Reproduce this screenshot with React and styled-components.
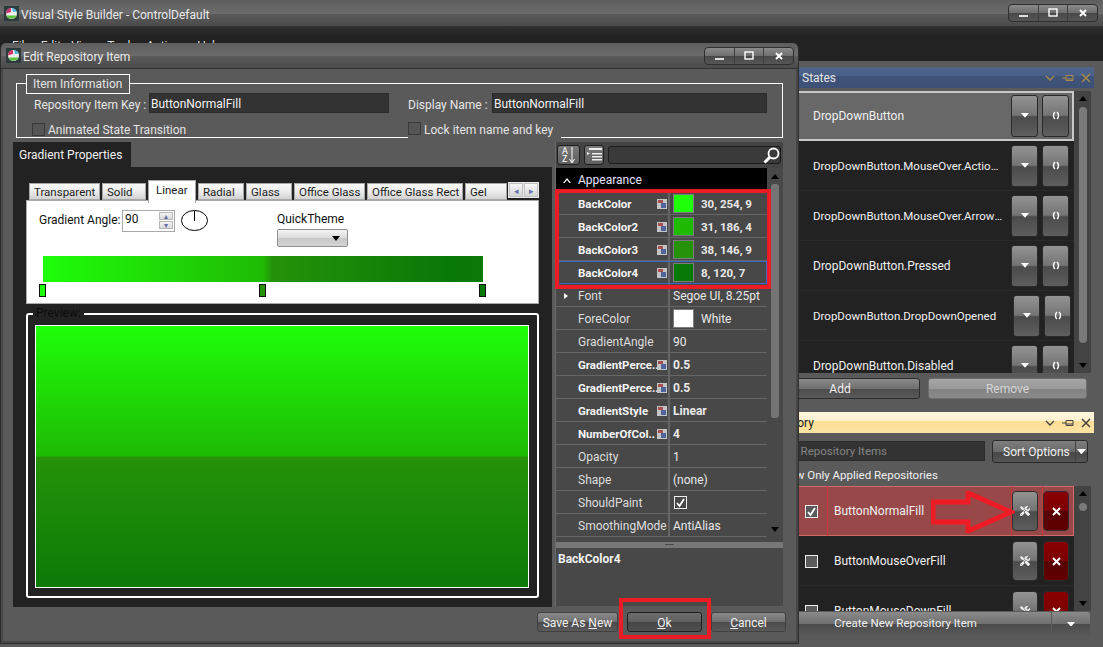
import React from "react";
import styled, { createGlobalStyle } from "styled-components";
import { FaTools } from "react-icons/fa";

const gloss = `linear-gradient(#939393, #747474 48%, #4b4b4b 52%, #5e5e5e)`;
const chrome = `linear-gradient(#5e5e5e, #6c6c6c 52%, #5b5b5b 52%, #4b4b4b)`;

const GlobalStyle = createGlobalStyle`
  html, body {
    margin: 0;
    width: 1103px;
    height: 647px;
    overflow: hidden;
    background: #5a5a5a;
    font-family: Roboto, "Open Sans", "Liberation Sans", sans-serif;
    font-size: 12px;
    color: #f0f0f0;
  }
  * { box-sizing: border-box; }
`;

const Logo = () => (
  <LogoBox>
    <svg width="13" height="13" viewBox="0 0 13 13">
      <circle cx="6.5" cy="6.5" r="5.5" fill="#eee" />
      <path d="M1 6.5a5.5 5.5 0 0 1 5-5.5v4z" fill="#d8326e" />
      <path d="M1.5 8.5a5.5 5.5 0 0 0 10 0z" fill="#5cc43c" />
      <path d="M7 1a5.5 5.5 0 0 1 4.500 3.500L8 5z" fill="#46b6d8" />
    </svg>
  </LogoBox>
);

const WindowButtons = () => (
  <WinButtons>
    <WinButton>
      <svg width="10" height="10"><rect x="1" y="7" width="9" height="2" fill="#ddd" /></svg>
    </WinButton>
    <WinButton>
      <svg width="10" height="10"><rect x="1" y="1" width="8" height="7" fill="none" stroke="#fff" strokeWidth="1.400" /></svg>
    </WinButton>
    <WinButton>
      <svg width="10" height="10"><path d="M2 2l6 6M8 2l-6 6" stroke="#fff" strokeWidth="2" /></svg>
    </WinButton>
  </WinButtons>
);

const PropIcon = () => (
  <svg width="10" height="10" viewBox="0 0 10 10">
    <rect width="10" height="10" fill="#c4c4c4" />
    <rect x="1" y="1" width="5" height="3" fill="#a8504e" />
    <rect x="4" y="4" width="5" height="5" fill="#4f639c" />
  </svg>
);

const Caret = ({ size = 7 }) => (
  <svg width={size} height={size * 0.6} viewBox="0 0 10 6">
    <path d="M0 0h10L5 6z" fill="#fff" />
  </svg>
);

const RefreshIcon = () => (
  <svg width="8" height="9" viewBox="0 0 8 9" fill="none" stroke="#fff" strokeWidth="1.500">
    <path d="M3 1C1 2.500 1 6.500 3 8" />
    <path d="M5 1C7 2.500 7 6.500 5 8" />
  </svg>
);

const CrossIcon = () => (
  <svg width="9" height="9" viewBox="0 0 9 9">
    <path d="M1 1l7 7M8 1l-7 7" stroke="#fff" strokeWidth="2" />
  </svg>
);

const ArrowUp = () => (
  <svg width="8" height="5" viewBox="0 0 8 5"><path d="M0 5h8L4 0z" fill="#000" /></svg>
);
const ArrowDown = () => (
  <svg width="8" height="5" viewBox="0 0 8 5"><path d="M0 0h8L4 5z" fill="#000" /></svg>
);

const properties = [
  { name: "BackColor", bold: true, icon: true, swatch: "#1efe09", value: "30, 254, 9" },
  { name: "BackColor2", bold: true, icon: true, swatch: "#1fba04", value: "31, 186, 4" },
  { name: "BackColor3", bold: true, icon: true, swatch: "#269209", value: "38, 146, 9" },
  { name: "BackColor4", bold: true, icon: true, swatch: "#087807", value: "8, 120, 7", selected: true },
  { name: "Font", expand: true, value: "Segoe UI, 8.25pt" },
  { name: "ForeColor", swatch: "#fff", value: "White", plain: true },
  { name: "GradientAngle", value: "90" },
  { name: "GradientPerce..", bold: true, icon: true, value: "0.5" },
  { name: "GradientPerce..", bold: true, icon: true, value: "0.5" },
  { name: "GradientStyle", bold: true, icon: true, value: "Linear" },
  { name: "NumberOfCol..", bold: true, icon: true, value: "4" },
  { name: "Opacity", value: "1" },
  { name: "Shape", value: "(none)" },
  { name: "ShouldPaint", check: true },
  { name: "SmoothingMode", value: "AntiAlias" },
];

const states = [
  { name: "DropDownButton", active: true },
  { name: "DropDownButton.MouseOver.ActionButton", tight: true },
  { name: "DropDownButton.MouseOver.ArrowButton", tight: true },
  { name: "DropDownButton.Pressed" },
  { name: "DropDownButton.DropDownOpened", nudge: true, tight: true },
  { name: "DropDownButton.Disabled" },
];

const repositories = [
  { name: "ButtonNormalFill", active: true },
  { name: "ButtonMouseOverFill" },
  { name: "ButtonMouseDownFill" },
];

const tabs = [
  ["Transparent", 71],
  ["Solid", 44],
  ["Linear", 48, true],
  ["Radial", 46],
  ["Glass", 46],
  ["Office Glass", 71],
  ["Office Glass Rect", 96],
  ["Gel", 42],
];

export default function App() {
  return (
    <Screen>
      <GlobalStyle />
      <TitleBar $height={27}>
        <Logo />
        <TitleText>Visual Style Builder - ControlDefault</TitleText>
        <WindowButtons />
      </TitleBar>
      <MenuBar>
        {["File", "Edit", "View", "Tools", "Actions", "Help"].map((m) => (
          <span key={m}>{m}</span>
        ))}
      </MenuBar>

      <Workspace>
        <Dock>
          <DockHeader $pad={62}>
            States
            <HeaderIcons $color="#a88a4a"><HeaderGlyphs /></HeaderIcons>
          </DockHeader>
          <ListFrame $height={282}>
            <List>
              {states.map((s) => (
                <StateRow key={s.name} $active={s.active}>
                  <StateName $tight={s.tight}>{s.name}</StateName>
                  <RowButtons $nudge={s.nudge}>
                    <RowButton><Caret size={8} /></RowButton>
                    <RowButton><RefreshIcon /></RowButton>
                  </RowButtons>
                </StateRow>
              ))}
            </List>
            <ScrollBar>
              <ArrowUp />
              <Thumb $height={236} />
              <ArrowDown />
            </ScrollBar>
          </ListFrame>
          <Actions>
            <ActionButton $width={160}>Add</ActionButton>
            <ActionButton $width={159} $disabled>Remove</ActionButton>
          </Actions>
          <DockHeader $pad={17} $light>
            Repository
            <HeaderIcons $color="#444"><HeaderGlyphs /></HeaderIcons>
          </DockHeader>
          <FilterRow>
            <FilterInput>Filter Repository Items</FilterInput>
            <SortButton>
              <span>Sort Options</span>
              <SortCaret><Caret size={9} /></SortCaret>
            </SortButton>
          </FilterRow>
          <ShowOnly>Show Only Applied Repositories</ShowOnly>
          <ListFrame $height={125}>
            <List>
              {repositories.map((r) => (
                <RepoRow key={r.name} $active={r.active}>
                  <CheckCell $active={r.active}>
                    <CheckBox>
                      {r.active && (
                        <svg width="11" height="11" viewBox="0 0 11 11">
                          <path d="M2 6l2.500 3L9 2" fill="none" stroke="#fff" strokeWidth="1.800" />
                        </svg>
                      )}
                    </CheckBox>
                  </CheckCell>
                  <RepoName>{r.name}</RepoName>
                  <RepoCell $active={r.active} $width={31}>
                    <RepoButton $active={r.active}><FaTools size={10} /></RepoButton>
                  </RepoCell>
                  <RepoCell $active={r.active} $width={32}>
                    <RepoButton $active={r.active} $danger><CrossIcon /></RepoButton>
                  </RepoCell>
                </RepoRow>
              ))}
            </List>
            <ScrollBar>
              <ArrowUp />
              <Knob />
              <Spacer />
              <ArrowDown />
            </ScrollBar>
          </ListFrame>
          <CreateRow>
            <CreateButton>Create New Repository Item</CreateButton>
            <CreateCaret><Caret size={8} /></CreateCaret>
          </CreateRow>
        </Dock>
      </Workspace>

      <Dialog>
        <TitleBar $height={26} $inset>
          <Logo />
          <TitleText>Edit Repository Item</TitleText>
          <WindowButtons />
        </TitleBar>

        <InfoGroup>
          <Legend>Item Information</Legend>
          <InfoGrid>
            <InfoLabel>Repository Item Key :</InfoLabel>
            <TextField>ButtonNormalFill</TextField>
            <span />
            <InfoLabel>Display Name :</InfoLabel>
            <TextField>ButtonNormalFill</TextField>
          </InfoGrid>
          <CheckLine>
            <DarkCheck />
            <CheckText>Animated State Transition</CheckText>
          </CheckLine>
          <LockLine>
            <DarkCheck />
            <CheckText>Lock item name and key</CheckText>
          </LockLine>
        </InfoGroup>

        <Columns>
          <LeftColumn>
            <PageTab>Gradient Properties</PageTab>
            <PagePanel>
              <TabStrip>
                {tabs.map(([label, width, active]) => (
                  <Tab key={label} $width={width} $active={active}>{label}</Tab>
                ))}
                <TabArrows>
                  <TabArrow>◂</TabArrow>
                  <TabArrow>▸</TabArrow>
                </TabArrows>
              </TabStrip>
              <EditorCard>
                <EditorRow>
                  <AngleLabel>Gradient Angle:</AngleLabel>
                  <Spinner>
                    90
                    <SpinButtons>
                      <SpinButton>▴</SpinButton>
                      <SpinButton>▾</SpinButton>
                    </SpinButtons>
                  </Spinner>
                  <AngleDial>
                    <svg width="27" height="21" viewBox="0 0 27 21">
                      <ellipse cx="13.500" cy="10.500" rx="13" ry="10" fill="#fff" stroke="#000" />
                      <path d="M13.500 1v10" stroke="#000" />
                    </svg>
                  </AngleDial>
                  <ThemeColumn>
                    <ThemeLabel>QuickTheme</ThemeLabel>
                    <ThemeSelect>
                      <svg width="8" height="5" viewBox="0 0 8 5"><path d="M0 0h8L4 5z" fill="#000" /></svg>
                    </ThemeSelect>
                  </ThemeColumn>
                </EditorRow>
                <GradientBar />
                <StopRow>
                  <Stop $color="#1efe09" />
                  <Stop $color="#269209" />
                  <Stop $color="#087807" />
                </StopRow>
              </EditorCard>
              <PreviewGroup>
                <PreviewLegend>Preview:</PreviewLegend>
                <PreviewFill />
              </PreviewGroup>
            </PagePanel>
          </LeftColumn>

          <RightColumn>
            <GridToolbar>
              <ToolButton $width={23}>
                <AzLetters><span>A</span><span>Z</span></AzLetters>
                <svg width="6" height="17" viewBox="0 0 6 17">
                  <path d="M3 0v15M0.500 12L3 16l2.500-4" fill="none" stroke="#fff" />
                </svg>
              </ToolButton>
              <ToolButton $width={20}>
                <svg width="15" height="14" viewBox="0 0 15 14" fill="#eee">
                  <rect x="2" y="0" width="13" height="2" />
                  <path d="M0 4l3 1.500L0 7z" />
                  <rect x="5" y="5" width="10" height="1.500" />
                  <rect x="5" y="8" width="10" height="1.500" />
                  <rect x="5" y="11" width="10" height="1.500" />
                </svg>
              </ToolButton>
              <GridSearch>
                <svg width="17" height="17" viewBox="0 0 17 17" fill="none" stroke="#fff">
                  <circle cx="10.500" cy="6.500" r="5" strokeWidth="1.800" />
                  <path d="M7 10l-5.500 5.500" strokeWidth="3" />
                </svg>
              </GridSearch>
            </GridToolbar>
            <GridBody>
              <GridRows>
                <Category>
                  <svg width="8" height="5" viewBox="0 0 8 5">
                    <path d="M0 5l4-5 4 5-1.500 0L4 2 1.500 5z" fill="#fff" />
                  </svg>
                  Appearance
                </Category>
                {properties.map((p, i) => (
                  <PropRow key={i} $selected={p.selected}>
                    <PropName $bold={p.bold}>
                      <ExpandSlot>
                        {p.expand && (
                          <svg width="4" height="6" viewBox="0 0 4 6"><path d="M0 0l4 3-4 3z" fill="#fff" /></svg>
                        )}
                      </ExpandSlot>
                      <NameText>{p.name}</NameText>
                      {p.icon && <PropIcon />}
                    </PropName>
                    <PropValue $bold={p.bold && !p.swatch}>
                      {p.swatch && <Swatch $color={p.swatch} />}
                      {p.check && (
                        <ValueCheck>
                          <svg width="11" height="11" viewBox="0 0 11 11">
                            <path d="M2 6l2.500 3L9 2" fill="none" stroke="#fff" strokeWidth="1.800" />
                          </svg>
                        </ValueCheck>
                      )}
                      <ValueText $strong={p.swatch && !p.plain}>{p.value}</ValueText>
                    </PropValue>
                  </PropRow>
                ))}
              </GridRows>
              <GridScroll>
                <ArrowUp />
                <GridThumb />
                <Spacer />
                <ArrowDown />
              </GridScroll>
            </GridBody>
            <Splitter>•••••</Splitter>
            <Description>BackColor4</Description>
          </RightColumn>
        </Columns>

        <DialogFooter>
          <FooterButton $width={81}><span>Save As <u>N</u>ew</span></FooterButton>
          <FooterButton $width={75} $primary><span><u>O</u>k</span></FooterButton>
          <FooterButton $width={75}><span><u>C</u>ancel</span></FooterButton>
        </DialogFooter>
      </Dialog>

      <RedBox $x={555} $y={189} $w={216} $h={100} />
      <RedBox $x={619} $y={598} $w={92} $h={41} />
      <RedArrow width="84" height="42" viewBox="0 0 84 42">
        <path d="M2 11H37V2L80 21L37 40V31H2z" fill="none" stroke="#ed1c24" strokeWidth="5" />
      </RedArrow>
    </Screen>
  );
}

const HeaderGlyphs = () => (
  <>
    <svg width="10" height="6" viewBox="0 0 10 6">
      <path d="M1 1l4 4 4-4" fill="none" stroke="currentColor" strokeWidth="1.300" />
    </svg>
    <svg width="12" height="10" viewBox="0 0 12 10">
      <path d="M0 5h4M4 2.500h7v5H4zM4 6h7" fill="none" stroke="currentColor" />
    </svg>
    <svg width="10" height="10" viewBox="0 0 10 10">
      <path d="M1 1l8 8M9 1l-8 8" stroke="currentColor" strokeWidth="1.500" />
    </svg>
  </>
);

const Screen = styled.div`
  position: relative;
  width: 1103px;
  height: 647px;
  overflow: hidden;
  background: #5a5a5a;
`;

const TitleBar = styled.div`
  display: flex;
  align-items: center;
  height: ${(p) => p.$height}px;
  padding: 0 ${(p) => (p.$inset ? 4 : 5)}px 0 ${(p) => (p.$inset ? 5 : 4)}px;
  background: ${chrome};
  border-bottom: 1px solid #333;
`;

const LogoBox = styled.div`
  display: flex;
  align-items: center;
  justify-content: center;
  width: 15px;
  height: 15px;
  background: #2b3a3a;
  margin-right: 2px;
`;

const TitleText = styled.div`
  flex: 1;
  padding-top: 3px;
  font-size: 12px;
  color: #eaeaea;
`;

const WinButtons = styled.div`
  display: flex;
  width: 90px;
  height: 18px;
  border: 1px solid #2e2e2e;
  border-radius: 4px;
  overflow: hidden;
  background: linear-gradient(#8a8a8a, #6e6e6e 50%, #484848 50%, #565656);
`;

const WinButton = styled.div`
  flex: 1;
  display: flex;
  align-items: center;
  justify-content: center;
  & + & { border-left: 1px solid #3e3e3e; }
`;

const MenuBar = styled.div`
  display: flex;
  gap: 10px;
  height: 34px;
  padding: 12px 0 0 12px;
  background: linear-gradient(#2e2e2e, #222 30%);
  font-size: 12px;
  color: #ddd;
`;

const Workspace = styled.div`
  display: flex;
  justify-content: flex-end;
  padding: 6px 9px 0 0;
`;

const Dock = styled.div`
  display: flex;
  flex-direction: column;
  width: 354px;
`;

const DockHeader = styled.div`
  display: flex;
  align-items: center;
  justify-content: space-between;
  height: 21px;
  flex: none;
  padding: 0 3px 0 ${(p) => p.$pad}px;
  font-size: 12px;
  color: ${(p) => (p.$light ? "#222" : "#e6e6e6")};
  background: ${(p) =>
    p.$light
      ? "linear-gradient(#fff6de, #fff0cf 45%, #fddf96 45%, #fde3a3)"
      : "linear-gradient(#4f6488, #48608a 45%, #3f5378 45%, #3e5076)"};
`;

const HeaderIcons = styled.div`
  display: flex;
  align-items: center;
  gap: 7px;
  color: ${(p) => p.$color};
`;

const ListFrame = styled.div`
  display: flex;
  flex: none;
  height: ${(p) => p.$height}px;
  width: 351px;
  margin-top: 3px;
  overflow: hidden;
`;

const List = styled.div`
  flex: 1;
  background: #222;
  overflow: hidden;
`;

const StateRow = styled.div`
  display: flex;
  align-items: center;
  justify-content: space-between;
  height: 50px;
  padding: 0 0 1px 73px;
  background: ${(p) => (p.$active ? "#686868" : "#222")};
  box-shadow: ${(p) => (p.$active ? "inset 0 0 0 2px #c8c8c8" : "inset 0 -1px 0 #2a2a2a")};
`;

const StateName = styled.div`
  width: 190px;
  font-size: ${(p) => (p.$tight ? 11.5 : 12)}px;
  white-space: nowrap;
  overflow: hidden;
  text-overflow: ellipsis;
`;

const RowButtons = styled.div`
  display: flex;
  gap: 4px;
  margin-right: ${(p) => (p.$nudge ? 3 : 5)}px;
`;

const RowButton = styled.div`
  display: flex;
  align-items: center;
  justify-content: center;
  width: 27px;
  height: 42px;
  border-radius: 3px;
  background: ${gloss};
  border: 1px solid #2a2a2a;
`;

const ScrollBar = styled.div`
  display: flex;
  flex-direction: column;
  align-items: center;
  justify-content: space-between;
  flex: none;
  width: 17px;
  padding: 5px 0;
  background: #434343;
`;

const Thumb = styled.div`
  width: 8px;
  height: ${(p) => p.$height}px;
  margin-bottom: 15px;
  border-radius: 4px;
  background: #7a7a7a;
`;

const Knob = styled.div`
  width: 8px;
  height: 8px;
  margin-top: 7px;
  border-radius: 50%;
  background: #7a7a7a;
`;

const Spacer = styled.div`
  flex: 1;
`;

const Actions = styled.div`
  display: flex;
  gap: 8px;
  margin: 5px 0 13px 20px;
`;

const ActionButton = styled.div`
  display: flex;
  align-items: center;
  justify-content: center;
  width: ${(p) => p.$width}px;
  height: 21px;
  border-radius: 3px;
  font-size: 12px;
  background: ${(p) =>
    p.$disabled
      ? "linear-gradient(#a4a4a4, #9a9a9a 50%, #828282 50%, #8a8a8a)"
      : "linear-gradient(#8a8a8a, #6f6f6f 50%, #4b4b4b 50%, #5a5a5a)"};
  border: 1px solid ${(p) => (p.$disabled ? "#6e6e6e" : "#2b2b2b")};
  color: ${(p) => (p.$disabled ? "#d4d4d4" : "#f0f0f0")};
`;

const FilterRow = styled.div`
  display: flex;
  gap: 7px;
  margin-top: 7px;
  padding-left: 5px;
`;

const FilterInput = styled.div`
  display: flex;
  align-items: center;
  width: 240px;
  height: 20px;
  padding-left: 26px;
  margin-top: 1px;
  background: #333;
  border: 1px solid #2c2c2c;
  color: #858585;
  font-size: 11.5px;
`;

const SortButton = styled.div`
  display: flex;
  align-items: center;
  justify-content: space-between;
  width: 96px;
  height: 23px;
  padding-left: 10px;
  border-radius: 3px;
  border: 1px solid #2a2a2a;
  background: linear-gradient(#7e7e7e, #6a6a6a 50%, #474747 50%, #555);
  font-size: 12px;
  & > span { white-space: nowrap; }
`;

const SortCaret = styled.div`
  display: flex;
  align-items: center;
  justify-content: center;
  width: 12px;
  height: 100%;
  border-left: 1px solid #444;
`;

const ShowOnly = styled.div`
  margin: 2px 0 0 36px;
  height: 18px;
  line-height: 21px;
  font-size: 11.5px;
  white-space: nowrap;
`;

const RepoRow = styled.div`
  display: flex;
  align-items: center;
  height: 50px;
  background: ${(p) => (p.$active ? "#984848" : "#222")};
  box-shadow: ${(p) => (p.$active ? "inset 0 0 0 1px #d26a6a" : "inset 0 -1px 0 #2a2a2a")};
`;

const CheckCell = styled.div`
  display: flex;
  align-items: center;
  justify-content: flex-end;
  width: 88px;
  height: 100%;
  padding-right: 9px;
  border-right: 1px solid ${(p) => (p.$active ? "#c83a3a" : "transparent")};
`;

const CheckBox = styled.div`
  display: flex;
  align-items: center;
  justify-content: center;
  width: 13px;
  height: 13px;
  border: 1px solid #eee;
  background: #5a5a5a;
`;

const RepoName = styled.div`
  flex: 1;
  padding-left: 6px;
  font-size: 12px;
`;

const RepoCell = styled.div`
  display: flex;
  align-items: center;
  width: ${(p) => p.$width}px;
  height: 100%;
  padding-right: ${(p) => p.$width - 27}px;
  border-left: 1px solid ${(p) => (p.$active ? "#c83a3a" : "transparent")};
`;

const RepoButton = styled.div`
  display: flex;
  align-items: center;
  justify-content: center;
  width: 27px;
  height: 40px;
  border-radius: 4px;
  border: 1px solid ${(p) => (p.$active ? "#2e2e2e" : "#2a2a2a")};
  background: ${(p) =>
    p.$danger ? "linear-gradient(#8a0000, #7c0000 50%, #560000 50%, #620000)" : gloss};
`;

const CreateRow = styled.div`
  display: flex;
  gap: 1px;
  margin: 1px 0 0 20px;
`;

const CreateButton = styled.div`
  display: flex;
  align-items: center;
  justify-content: center;
  width: 291px;
  height: 24px;
  padding-bottom: 2px;
  border-radius: 3px 0 0 3px;
  font-size: 11.5px;
  background: linear-gradient(#8a8a8a, #6f6f6f 50%, #4b4b4b 50%, #5a5a5a);
`;

const CreateCaret = styled(CreateButton)`
  width: 38px;
  padding-bottom: 0;
  border-radius: 0 3px 3px 0;
`;

const Dialog = styled.div`
  position: absolute;
  left: 0;
  top: 43px;
  width: 799px;
  height: 601px;
  background: #5a5a5a;
  border-radius: 6px 6px 0 0;
  border: 1px solid #2e2e2e;
  border-top: 0;
  box-shadow: inset 2px 0 0 #474747, inset -2px 0 0 #474747, inset 0 -2px 0 #474747;
  overflow: hidden;
`;

const InfoGroup = styled.div`
  position: relative;
  width: 767px;
  height: 55px;
  margin: 14px 0 0 15px;
  border: 1px solid #fff;
`;

const Legend = styled.div`
  position: absolute;
  left: 9px;
  top: -10px;
  width: 104px;
  height: 20px;
  line-height: 19px;
  padding-left: 6px;
  background: #5a5a5a;
  border: 1px solid #fff;
  color: #e2e2e2;
  font-size: 12px;
`;

const InfoGrid = styled.div`
  display: grid;
  grid-template-columns: 115px 240px 19px 84px 275px;
  align-items: center;
  margin: 9px 0 0 17px;
`;

const InfoLabel = styled.div`
  padding-top: 3px;
  color: #e6e6e6;
  font-size: 12px;
  white-space: nowrap;
`;

const TextField = styled.div`
  display: flex;
  align-items: center;
  height: 20px;
  padding: 1px 0 0 1px;
  background: #333;
  border: 1px solid #2b2b2b;
  font-size: 12px;
  color: #f2f2f2;
`;

const CheckLine = styled.div`
  display: flex;
  align-items: center;
  gap: 3px;
  margin: 8px 0 0 15px;
  font-size: 12px;
  color: #e4e4e4;
`;

const LockLine = styled.div`
  position: absolute;
  left: 391px;
  top: 34px;
  display: flex;
  align-items: center;
  gap: 3px;
  width: 153px;
  height: 21px;
  background: #5a5a5a;
  font-size: 12px;
  color: #e4e4e4;
  white-space: nowrap;
`;

const CheckText = styled.span`
  padding-top: 2px;
`;

const DarkCheck = styled.span`
  display: inline-block;
  width: 13px;
  height: 13px;
  background: #555;
  border: 1px solid #3a3a3a;
`;

const Columns = styled.div`
  display: flex;
  gap: 3px;
  margin: 4px 0 0 12px;
`;

const LeftColumn = styled.div`
  width: 539px;
`;

const PageTab = styled.div`
  display: flex;
  align-items: center;
  width: 118px;
  height: 25px;
  padding: 1px 0 0 6px;
  background: #222;
  font-size: 12px;
`;

const PagePanel = styled.div`
  height: 440px;
  padding: 13px 13px 0;
  background: #222;
`;

const TabStrip = styled.div`
  position: relative;
  display: flex;
  align-items: flex-end;
  gap: 2px;
  height: 20px;
  padding-left: 3px;
`;

const Tab = styled.div`
  position: relative;
  z-index: ${(p) => (p.$active ? 2 : 0)};
  width: ${(p) => p.$width}px;
  height: ${(p) => (p.$active ? 23 : 17)}px;
  margin-bottom: ${(p) => (p.$active ? -3 : 0)}px;
  padding: ${(p) => (p.$active ? "2px 0 0 7px" : "1px 0 0 4px")};
  background: ${(p) => (p.$active ? "#fff" : "linear-gradient(#fafafa, #ececec 50%, #d2d2d2)")};
  border: 1px solid #a8a8a8;
  border-bottom: ${(p) => (p.$active ? "0" : "1px solid #a8a8a8")};
  color: #1c1c1c;
  font-size: 11.5px;
  line-height: 14px;
  white-space: nowrap;
  overflow: hidden;
`;

const TabArrows = styled.div`
  position: absolute;
  left: 482px;
  top: 2px;
  display: flex;
  gap: 1px;
  width: 31px;
  height: 16px;
  padding: 1px;
  background: #e8e8e8;
`;

const TabArrow = styled.div`
  flex: 1;
  text-align: center;
  font-size: 9px;
  line-height: 14px;
  color: #6670a8;
  background: linear-gradient(#f8f8f8, #d4d4d4);
  border: 1px solid #c2c2c2;
`;

const EditorCard = styled.div`
  height: 104px;
  width: 513px;
  padding-top: 9px;
  background: #fff;
  border: 1px solid #aaa;
  color: #111;
`;

const EditorRow = styled.div`
  display: flex;
  height: 37px;
  padding-left: 12px;
`;

const AngleLabel = styled.div`
  width: 83px;
  line-height: 21px;
  font-size: 12px;
  white-space: nowrap;
`;

const Spinner = styled.div`
  display: flex;
  justify-content: space-between;
  width: 53px;
  height: 22px;
  padding: 1px 1px 0 2px;
  border: 1px solid #aaa;
  font-size: 12px;
`;

const SpinButtons = styled.div`
  display: flex;
  flex-direction: column;
  gap: 1px;
`;

const SpinButton = styled.div`
  width: 14px;
  height: 8px;
  font-size: 8px;
  line-height: 7px;
  text-align: center;
  color: #6670a8;
  background: linear-gradient(#f4f4f4, #d8d8d8);
  border: 1px solid #b8b8b8;
`;

const AngleDial = styled.div`
  display: flex;
  width: 27px;
  height: 21px;
  margin-left: 6px;
`;

const ThemeColumn = styled.div`
  display: flex;
  flex-direction: column;
  width: 71px;
  margin-left: 69px;
`;

const ThemeLabel = styled.div`
  height: 19px;
  line-height: 19px;
  font-size: 12px;
`;

const ThemeSelect = styled.div`
  display: flex;
  align-items: center;
  justify-content: flex-end;
  height: 21px;
  padding-right: 7px;
  border: 1px solid #8e8e8e;
  border-radius: 2px;
  background: linear-gradient(#f4f4f4, #dcdcdc 50%, #c8c8c8 50%, #d4d4d4);
`;

const GradientBar = styled.div`
  width: 440px;
  height: 26px;
  margin: 9px 0 0 16px;
  background: linear-gradient(90deg, #1efe09 0%, #1fba04 50%, #269209 52%, #087807 92%, #0b7a07 100%);
`;

const StopRow = styled.div`
  display: flex;
  justify-content: space-between;
  width: 447px;
  margin: 2px 0 0 12px;
`;

const Stop = styled.div`
  width: 7px;
  height: 13px;
  background: ${(p) => p.$color};
  border: 1px solid #111;
`;

const PreviewGroup = styled.div`
  position: relative;
  width: 513px;
  height: 285px;
  margin-top: 9px;
  padding: 10px 8px 0 7px;
  border: 2px solid #fff;
  border-radius: 3px;
`;

const PreviewLegend = styled.div`
  position: absolute;
  left: 5px;
  top: -9px;
  padding: 0 3px;
  background: #222;
  color: #0d0d0d;
  font-size: 12px;
  line-height: 14px;
`;

const PreviewFill = styled.div`
  height: 263px;
  border: 1px solid #fff;
  background: linear-gradient(#1efe09 0%, #1fba04 49.800%, #269209 50.200%, #0b7a07 100%);
`;

const RightColumn = styled.div`
  display: flex;
  flex-direction: column;
  width: 228px;
  height: 464px;
  background: #484848;
  border-left: 1px solid #6a6a6a;
`;

const GridToolbar = styled.div`
  display: flex;
  align-items: center;
  gap: 3px;
  height: 26px;
  padding: 0 1px;
  background: #444;
`;

const ToolButton = styled.div`
  display: flex;
  align-items: center;
  justify-content: center;
  gap: 1px;
  width: ${(p) => p.$width}px;
  height: 20px;
  margin-right: 1px;
  border: 1px solid #1e1e1e;
  border-radius: 3px;
  background: linear-gradient(#7a7a7a, #5e5e5e);
`;

const AzLetters = styled.div`
  display: flex;
  flex-direction: column;
  font-size: 9px;
  line-height: 8px;
  color: #fff;
`;

const GridSearch = styled.div`
  display: flex;
  align-items: center;
  justify-content: flex-end;
  flex: 1;
  height: 18px;
  margin-right: 1px;
  background: #3a3a3a;
  border: 1px solid #1c1c1c;
  border-radius: 3px;
`;

const GridBody = styled.div`
  display: flex;
  height: 372px;
  overflow: hidden;
`;

const GridRows = styled.div`
  width: 211px;
`;

const Category = styled.div`
  display: flex;
  align-items: center;
  gap: 7px;
  height: 24px;
  padding-left: 7px;
  background: #000;
  color: #e4e4ff;
  font-size: 12px;
`;

const PropRow = styled.div`
  display: flex;
  height: 23px;
  border-bottom: 1px solid ${(p) => (p.$selected ? "#3a66c4" : "#666")};
  outline: ${(p) => (p.$selected ? "1px solid #3a66c4" : "none")};
  outline-offset: -1px;
`;

const PropName = styled.div`
  display: flex;
  align-items: center;
  width: 114px;
  padding: 1px 1px 0 0;
  border-right: 2px solid #666;
  font-weight: ${(p) => (p.$bold ? 700 : 400)};
  font-size: ${(p) => (p.$bold ? 11.5 : 12)}px;
  color: ${(p) => (p.$bold ? "#f4f4f4" : "#dedede")};
`;

const ExpandSlot = styled.div`
  display: flex;
  align-items: center;
  justify-content: center;
  flex: none;
  width: 22px;
  padding-right: 3px;
`;

const NameText = styled.div`
  flex: 1;
  white-space: nowrap;
  overflow: hidden;
`;

const PropValue = styled.div`
  display: flex;
  align-items: center;
  flex: 1;
  padding: 0 0 0 3px;
  font-weight: ${(p) => (p.$bold ? 700 : 400)};
  font-size: 12px;
  color: #e8e8e8;
`;

const Swatch = styled.div`
  width: 21px;
  height: 19px;
  margin-right: 7px;
  background: ${(p) => p.$color};
  border: 1px solid #7c7c7c;
`;

const ValueText = styled.div`
  padding-top: 1px;
  font-weight: ${(p) => (p.$strong ? 700 : "inherit")};
  font-size: ${(p) => (p.$strong ? 11.5 : 12)}px;
  white-space: nowrap;
`;

const ValueCheck = styled.div`
  display: flex;
  align-items: center;
  justify-content: center;
  width: 13px;
  height: 13px;
  margin-left: 1px;
  border: 1px solid #eee;
`;

const GridScroll = styled.div`
  display: flex;
  flex-direction: column;
  align-items: center;
  flex: 1;
  padding: 6px 0 8px;
`;

const GridThumb = styled.div`
  width: 8px;
  height: 234px;
  margin-top: 5px;
  border-radius: 3px;
  background: #747474;
`;

const Splitter = styled.div`
  height: 6px;
  margin-top: 2px;
  background: #777;
  color: #111;
  text-align: center;
  font-size: 5px;
  line-height: 6px;
`;

const Description = styled.div`
  flex: 1;
  padding: 4px 2px;
  font-weight: 700;
  font-size: 12px;
  color: #f0f0f0;
`;

const DialogFooter = styled.div`
  display: flex;
  justify-content: flex-end;
  gap: 9px;
  margin-top: 5px;
  padding-right: 12px;
`;

const FooterButton = styled.div`
  display: flex;
  align-items: center;
  justify-content: center;
  width: ${(p) => p.$width}px;
  height: 20px;
  padding-top: 1px;
  border-radius: 3px;
  font-size: 12px;
  background: ${(p) =>
    p.$primary
      ? "linear-gradient(#6e6e6e, #5e5e5e 50%, #454545 50%, #505050)"
      : "linear-gradient(#8a8a8a, #6f6f6f 50%, #4b4b4b 50%, #5a5a5a)"};
  border: 1px solid ${(p) => (p.$primary ? "#1e1e1e" : "#404040")};
`;

const RedBox = styled.div`
  position: absolute;
  left: ${(p) => p.$x}px;
  top: ${(p) => p.$y}px;
  width: ${(p) => p.$w}px;
  height: ${(p) => p.$h}px;
  border: 4px solid #ed1c24;
  pointer-events: none;
`;

const RedArrow = styled.svg`
  position: absolute;
  left: 931px;
  top: 491px;
  pointer-events: none;
`;
